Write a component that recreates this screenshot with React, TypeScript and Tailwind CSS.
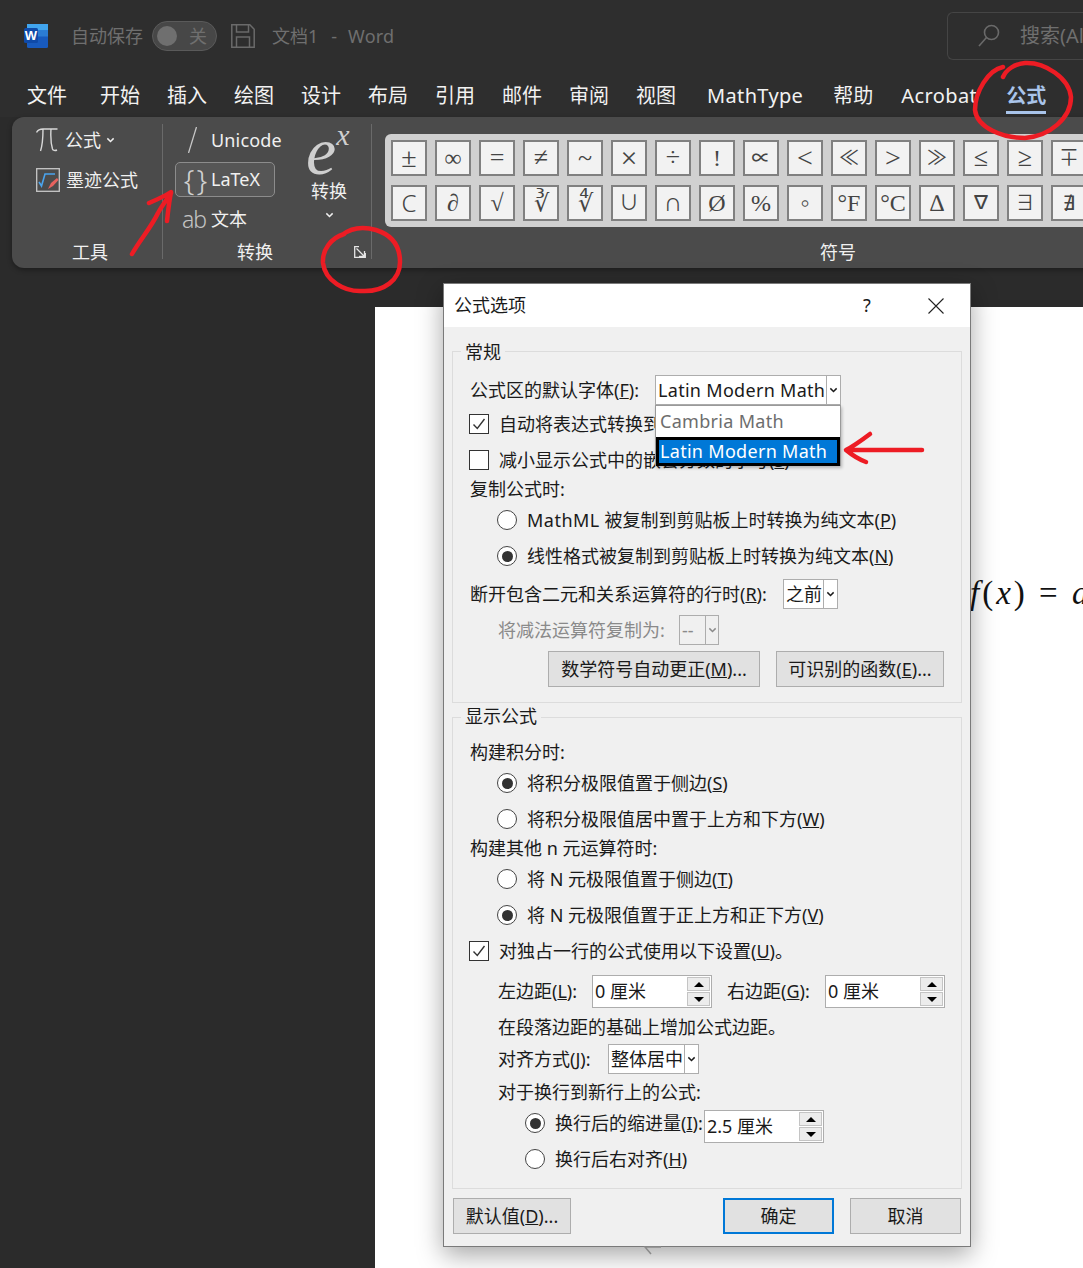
import React from 'react';

const TABS = [
  { label: '文件', gap: 'mr-[33px]' },
  { label: '开始', gap: 'mr-[27px]' },
  { label: '插入', gap: 'mr-[27px]' },
  { label: '绘图', gap: 'mr-[27px]' },
  { label: '设计', gap: 'mr-[27px]' },
  { label: '布局', gap: 'mr-[27px]' },
  { label: '引用', gap: 'mr-[27px]' },
  { label: '邮件', gap: 'mr-[27px]' },
  { label: '审阅', gap: 'mr-[27px]' },
  { label: '视图', gap: 'mr-[31px]' },
  { label: 'MathType', gap: 'mr-[30px] tracking-[0.35px]' },
  { label: '帮助', gap: 'mr-[28px]' },
  { label: 'Acrobat', gap: 'mr-[29px] tracking-[0.4px]' },
];

// glyph plus the size that brings it near the gallery's look; the fallback fonts differ a lot
const SYMBOLS = [
  { s: '±', c: 'text-[28px]' },
  { s: '∞', c: 'text-[24px]' },
  { s: '=', c: 'text-[26px]' },
  { s: '≠', c: 'text-[26px]' },
  { s: '~', c: 'text-[26px]' },
  { s: '×', c: 'text-[30px]' },
  { s: '÷', c: 'text-[26px]' },
  { s: '!', c: 'text-[24px]' },
  { s: '∝', c: 'text-[19px] !font-medium' },
  { s: '<', c: 'text-[28px]' },
  { s: '≪', c: 'text-[20px] !font-normal' },
  { s: '>', c: 'text-[28px]' },
  { s: '≫', c: 'text-[20px] !font-normal' },
  { s: '≤', c: 'text-[26px]' },
  { s: '≥', c: 'text-[26px]' },
  { s: '∓', c: 'text-[20px] !font-normal' },
  { s: 'C', c: "font-['Noto_Sans',sans-serif] text-[24px]" },
  { s: '∂', c: 'text-[24px]' },
  { s: '√', c: 'text-[24px]' },
  { s: '∛', c: 'text-[24px]' },
  { s: '∜', c: 'text-[24px]' },
  { s: '∪', c: 'text-[20px] !font-normal' },
  { s: '∩', c: 'text-[26px]' },
  { s: 'Ø', c: 'text-[24px]' },
  { s: '%', c: 'text-[24px]' },
  { s: '∘', c: 'text-[24px]' },
  { s: '°F', c: 'text-[24px]' },
  { s: '°C', c: 'text-[24px]' },
  { s: '∆', c: 'text-[24px]' },
  { s: '∇', c: 'text-[19px] !font-medium' },
  { s: '∃', c: 'text-[20px] !font-normal' },
  { s: '∄', c: 'text-[20px] !font-normal' },
];

const Chevron = ({ className = '' }: { className?: string }) => (
  <svg viewBox="0 0 10 6" className={className} fill="none" stroke="currentColor" strokeWidth="1.6">
    <path d="M1.5 1.2 5 4.6l3.5-3.4" />
  </svg>
);

const Radio = ({ on = false }: { on?: boolean }) => (
  <span className="flex h-5 w-5 shrink-0 items-center justify-center rounded-full border-[1.5px] border-[#444] bg-white">
    {on && <span className="h-[11px] w-[11px] rounded-full bg-[#333]" />}
  </span>
);

const Check = ({ on = false }: { on?: boolean }) => (
  <span className="-ml-px flex h-5 w-5 shrink-0 items-center justify-center border border-[#333] bg-white">
    {on && (
      <svg viewBox="0 0 16 16" className="h-4 w-4" fill="none" stroke="#333" strokeWidth="1.4">
        <path d="M2.5 8.5 6.3 12.5 13.5 3" />
      </svg>
    )}
  </span>
);

const Select = ({ text, className = '', disabled = false }: { text: string; className?: string; disabled?: boolean }) => (
  <div className={`flex h-[30px] items-stretch border border-[#adadad] ${disabled ? 'bg-[#f0f0f0] text-[#8a8a8a]' : 'bg-white'} ${className}`}>
    <span className="flex-1 overflow-hidden whitespace-nowrap pl-[2px] leading-[28px]">{text}</span>
    <span className="flex w-[14px] shrink-0 items-center justify-center border-l border-[#adadad]">
      <Chevron className="h-[6px] w-[9px]" />
    </span>
  </div>
);

const Spinner = ({ text, className = '' }: { text: string; className?: string }) => (
  <div className={`flex h-[33px] w-[120px] shrink-0 items-stretch border border-[#adadad] bg-white ${className}`}>
    <span className="flex-1 whitespace-pre pl-[2px] leading-[31px]">{text}</span>
    <span className="flex w-[25px] shrink-0 flex-col gap-px p-px">
      <span className="flex flex-1 items-center justify-center border border-[#c4c4c4] bg-[#ececec]">
        <span className="h-0 w-0 border-x-[5px] border-b-[5px] border-x-transparent border-b-black" />
      </span>
      <span className="flex flex-1 items-center justify-center border border-[#c4c4c4] bg-[#ececec]">
        <span className="h-0 w-0 border-x-[5px] border-t-[5px] border-x-transparent border-t-black" />
      </span>
    </span>
  </div>
);

const DlgButton = ({ children, className = '' }: { children: React.ReactNode; className?: string }) => (
  <div className={`flex h-[36px] items-center justify-center border border-[#adadad] bg-[#e1e1e1] ${className}`}>{children}</div>
);

const RadioRow = ({ on, children, className = '' }: { on?: boolean; children: React.ReactNode; className?: string }) => (
  <div className={`flex h-9 items-center pl-[27px] ${className}`}>
    <Radio on={on} />
    <span className="ml-[10px] whitespace-nowrap">{children}</span>
  </div>
);

const App = () => {
  return (
    <div className="relative flex h-[1268px] w-[1083px] flex-col overflow-hidden bg-[#2b2b2b] font-['Noto_Sans','Noto_Sans_CJK_SC',sans-serif] text-[18px] text-[#1a1a1a]">
      <div className="bg-[#2e2e2e]">
        {/* title bar */}
        <div className="flex h-[70px] items-center justify-between pl-6 pt-[2px] text-[#6f6f6f]">
          <div className="flex items-center">
            <svg viewBox="0 0 24 24" className="h-6 w-6 shrink-0">
              <rect x="3" y="0" width="21" height="24" rx="1.5" fill="#185abd" />
              <rect x="3" y="0" width="21" height="6.5" fill="#41a5ee" />
              <rect x="3" y="6.5" width="21" height="6" fill="#2b7cd3" />
              <rect x="0" y="4" width="14" height="15" rx="1.5" fill="#0f4aa8" />
              <text x="7" y="16" textAnchor="middle" fontSize="13" fontWeight="700" fill="#fff" fontFamily="Liberation Sans">W</text>
            </svg>
            <span className="ml-[23px] whitespace-nowrap">自动保存</span>
            <div className="ml-[9px] flex h-[30px] w-[65px] items-center rounded-full border border-[#5a5a5a] bg-[#474747] pl-[4px]">
              <span className="h-[20px] w-[20px] rounded-full bg-[#6f6f6f]" />
              <span className="ml-[12px]">关</span>
            </div>
            <svg viewBox="0 0 24 24" className="ml-[14px] h-6 w-6" fill="none" stroke="#6a6a6a" strokeWidth="1.5">
              <path d="M.8.8h18l4.4 4.4v18H.8z" />
              <path d="M5.500 1v7h12V1M5.500 23v-10h13v10" />
            </svg>
            <span className="ml-[17px]">文档1</span>
            <span className="ml-[13px]">-</span>
            <span className="ml-[11px] tracking-[0.2px]">Word</span>
          </div>
          <div className="flex h-12 w-[136px] shrink-0 items-center rounded-l-md border border-r-0 border-[#454545] pl-[30px]">
            <svg viewBox="0 0 22 24" className="h-6 w-[22px] shrink-0" fill="none" stroke="#6a6a6a" strokeWidth="1.6">
              <circle cx="13.500" cy="8.500" r="7" />
              <path d="M8.500 13.500 1 22" />
            </svg>
            <span className="ml-[20px] whitespace-nowrap text-[20px]">搜索(Alt+Q)</span>
          </div>
        </div>

        {/* tabs */}
        <div className="flex h-[47px] items-center whitespace-nowrap pl-[27px] pt-1 text-[20px] text-[#f2f2f2]">
          {TABS.map((t) => (
            <span key={t.label} className={t.gap}>{t.label}</span>
          ))}
          <span className="relative font-bold text-[#a9c4ea]">
            公式
            <span className="absolute left-0 right-0 top-[30px] h-[3px] bg-[#a9c4ea]" />
          </span>
        </div>
      </div>

      {/* ribbon */}
      <div className="ml-3 flex h-[151px] w-[1300px] shrink-0 rounded-l-xl bg-[#4b4b4b] text-[#f0f0f0] shadow-[0_2px_5px_rgba(0,0,0,0.35)]">
        <div className="flex w-[150px] shrink-0 flex-col pl-[24px] pt-[6px]">
          <div className="flex h-[34px] items-center">
            <svg viewBox="0 0 22 24" className="h-6 w-[22px] shrink-0" fill="none" stroke="#d8d8d8" strokeWidth="1.4">
              <path d="M.5 4.500C2 1.500 4 1 7 1h14.500M7 1c0 9-.5 16-2.500 22M15 1c-.5 8 0 15 1.500 20 .5 1.500 2.500 2 4.500 1" />
            </svg>
            <span className="ml-[7px]">公式</span>
            <Chevron className="ml-[5px] h-[6px] w-[9px]" />
          </div>
          <div className="mt-[6px] flex h-[34px] items-center">
            <svg viewBox="0 0 24 24" className="h-6 w-6 shrink-0" fill="none">
              <rect x=".7" y=".7" width="22.600" height="22.600" stroke="#c8c8c8" strokeWidth="1.300" />
              <path d="M3 14l2.500 4L9 6h10" stroke="#4aa4ee" strokeWidth="1.600" />
              <path d="M12 21l3-6 6-5 1.500 2-5.500 6z" fill="#e6625e" />
            </svg>
            <span className="ml-[6px] whitespace-nowrap">墨迹公式</span>
          </div>
          <div className="mt-auto h-[32px] pr-[18px] text-center leading-[32px]">工具</div>
        </div>
        <div className="mt-[7px] h-[135px] w-px shrink-0 bg-[#6a6a6a]" />

        <div className="flex w-[208px] shrink-0 flex-col pt-[6px]">
          <div className="flex">
            <div className="flex w-[124px] shrink-0 flex-col pl-3">
              <div className="flex h-[34px] items-center pl-[13px]">
                <svg viewBox="0 0 9 26" className="h-[26px] w-[9px] shrink-0" stroke="#c8c8c8" strokeWidth="1.300">
                  <path d="M8.500 0 .5 26" />
                </svg>
                <span className="ml-[14px] tracking-[0.15px]">Unicode</span>
              </div>
              <div className="mt-[5px] flex h-[35px] w-[100px] items-center rounded-[5px] border border-[#8c8c8c] bg-[#565656] pl-[6px]">
                <span className="w-[24px] shrink-0 whitespace-pre text-center text-[30px] font-light leading-none tracking-[-3px] text-[#d0d0d0]">{'{ }'}</span>
                <span className="ml-[5px]">LaTeX</span>
              </div>
              <div className="mt-[5px] flex h-[34px] items-center pl-[7px]">
                <span className="w-[29px] shrink-0 text-[23px] font-light tracking-[-1px] text-[#c4c4c4]">ab</span>
                <span className="whitespace-nowrap">文本</span>
              </div>
            </div>
            <div className="flex w-[84px] shrink-0 flex-col items-center">
              <div className="flex h-[50px] w-[46px] items-start font-['Liberation_Serif',serif] italic text-[#cfcfcf]">
                <span className="text-[68px] leading-[56px]">e</span>
                <span className="text-[30px] leading-[24px]">x</span>
              </div>
              <span className="mt-[5px] leading-[27px]">转换</span>
              <Chevron className="mt-[7px] h-[6px] w-[9px]" />
            </div>
          </div>
          <div className="mt-auto flex h-[32px] items-center">
            <span className="flex-1 text-center">转换</span>
            <span className="flex w-[24px] shrink-0 pl-[7px]">
              <svg viewBox="0 0 12 12" className="h-3 w-3" fill="none" stroke="#e6e6e6" strokeWidth="1.300">
                <path d="M5 .7H.7V11.300H11.300V7" />
                <path d="M2.500 2.500 10.500 10.500M10.500 5V10.500H5" />
              </svg>
            </span>
          </div>
        </div>
        <div className="mt-[7px] h-[135px] w-px shrink-0 bg-[#6a6a6a]" />

        <div className="flex w-[919px] shrink-0 flex-col pl-[13px] pt-[17px]">
          <div className="grid h-[93px] w-[716px] grid-cols-[repeat(16,36px)] gap-x-2 gap-y-2 rounded-l-md bg-[#d0d0d0] py-[6px] pl-[6px]">
            {SYMBOLS.map((g, i) => (
              <div
                key={i}
                className={`flex h-9 w-9 items-center justify-center border-2 border-[#808080] bg-[#f2f2f2] font-['Liberation_Serif','Noto_Sans_CJK_SC','DejaVu_Sans',serif] font-light leading-none text-[#444] ${g.c}`}
              >
                {g.s}
              </div>
            ))}
          </div>
          <div className="mt-auto h-[32px] text-center leading-[32px]">符号</div>
        </div>
      </div>

      {/* document page */}
      <div className="ml-[375px] mt-[39px] flex flex-1 overflow-hidden bg-white pl-[595px] pt-[263px]">
        <span className="whitespace-pre font-['Liberation_Serif',serif] text-[33px] leading-[46px] tracking-[3px] text-[#111]">
          <i>f</i>(<i>x</i>) = <i>a</i>
        </span>
      </div>

      {/* dialog */}
      <div className="absolute left-[443px] top-[283px] h-[964px] w-[528px] border border-[#7a7a7a] bg-[#f0f0f0] shadow-[0_8px_24px_rgba(0,0,0,0.35)]">
        <div className="flex h-[43px] items-center bg-white pl-[10px]">
          <span>公式选项</span>
          <span className="ml-[337px]">?</span>
          <svg viewBox="0 0 16 16" className="ml-[57px] h-4 w-4" fill="none" stroke="#222" strokeWidth="1.100">
            <path d="M.5.5l15 15M15.500.5l-15 15" />
          </svg>
        </div>

        <div className="relative ml-2 mt-6 h-[352px] w-[510px] border border-[#dcdcdc] pl-[17px]">
          <span className="absolute left-[8px] top-[-13px] bg-[#f0f0f0] px-1 leading-[26px]">常规</span>
          <div className="mt-[23px] flex h-[30px] items-center">
            <span className="w-[185px] shrink-0 whitespace-nowrap">公式区的默认字体(<u>F</u>):</span>
            <Select text="Latin Modern Math" className="w-[186px] tracking-[0.3px]" />
          </div>
          <div className="mt-px flex h-9 items-center">
            <Check on />
            <span className="ml-[10px] whitespace-nowrap">自动将表达式转换到专业格式</span>
          </div>
          <div className="flex h-9 items-center">
            <Check />
            <span className="ml-[10px] whitespace-nowrap">减小显示公式中的嵌套分数的字号(<u>S</u>)</span>
          </div>
          <div className="h-[22px] leading-[22px]">复制公式时:</div>
          <RadioRow className="mt-[2px]"><span className="tracking-[0.5px]">MathML</span> 被复制到剪贴板上时转换为纯文本(<u>P</u>)</RadioRow>
          <RadioRow on>线性格式被复制到剪贴板上时转换为纯文本(<u>N</u>)</RadioRow>
          <div className="mt-[5px] flex h-[30px] items-center">
            <span className="w-[313px] shrink-0 whitespace-nowrap">断开包含二元和关系运算符的行时(<u>R</u>):</span>
            <Select text="之前" className="w-[55px]" />
          </div>
          <div className="mt-[6px] flex h-[30px] items-center pl-[28px]">
            <span className="w-[181px] shrink-0 whitespace-nowrap text-[#8a8a8a]">将减法运算符复制为:</span>
            <Select text="--" disabled className="w-[40px] [&>span:last-child]:w-[13px]" />
          </div>
          <div className="mt-[6px] flex pl-[78px]">
            <DlgButton className="w-[212px]">数学符号自动更正(<u>M</u>)...</DlgButton>
            <DlgButton className="ml-4 w-[168px]">可识别的函数(<u>E</u>)...</DlgButton>
          </div>
        </div>

        <div className="relative ml-2 mt-[14px] h-[472px] w-[510px] border border-[#dcdcdc] pl-[17px]">
          <span className="absolute left-[8px] top-[-15px] bg-[#f0f0f0] px-1 leading-[26px]">显示公式</span>
          <div className="mt-[23px] h-[22px] leading-[22px]">构建积分时:</div>
          <RadioRow on className="mt-[2px]">将积分极限值置于侧边(<u>S</u>)</RadioRow>
          <RadioRow>将积分极限值居中置于上方和下方(<u>W</u>)</RadioRow>
          <div className="h-[22px] leading-[22px]">构建其他 n 元运算符时:</div>
          <RadioRow className="mt-[2px]">将 N 元极限值置于侧边(<u>T</u>)</RadioRow>
          <RadioRow on>将 N 元极限值置于正上方和正下方(<u>V</u>)</RadioRow>
          <div className="flex h-9 items-center">
            <Check on />
            <span className="ml-[10px] whitespace-nowrap">对独占一行的公式使用以下设置(<u>U</u>)。</span>
          </div>
          <div className="mt-[6px] flex h-[33px] items-center pl-[28px]">
            <span className="w-[94px] shrink-0 whitespace-nowrap">左边距(<u>L</u>):</span>
            <Spinner text="0 厘米" />
            <span className="ml-[15px] w-[98px] shrink-0 whitespace-nowrap">右边距(<u>G</u>):</span>
            <Spinner text="0 厘米" />
          </div>
          <div className="mt-2 h-[22px] whitespace-nowrap pl-[28px] leading-[22px]">在段落边距的基础上增加公式边距。</div>
          <div className="mt-[6px] flex h-[30px] items-center pl-[28px]">
            <span className="w-[110px] shrink-0 whitespace-nowrap">对齐方式(<u>J</u>):</span>
            <Select text="整体居中" className="w-[91px]" />
          </div>
          <div className="mt-[7px] h-[22px] pl-[28px] leading-[22px]">对于换行到新行上的公式:</div>
          <div className="mt-[7px] flex h-[33px] items-start pl-[55px]">
            <div className="flex h-[26px] w-[179px] shrink-0 items-center">
              <Radio on />
              <span className="ml-[10px] whitespace-nowrap">换行后的缩进量(<u>I</u>):</span>
            </div>
            <Spinner text="2.5 厘米" />
          </div>
          <div className="flex h-8 items-center pl-[55px]">
            <Radio />
            <span className="ml-[10px] whitespace-nowrap">换行后右对齐(<u>H</u>)</span>
          </div>
        </div>

        <div className="ml-[9px] mt-[9px] flex">
          <DlgButton className="w-[118px]">默认值(<u>D</u>)...</DlgButton>
          <DlgButton className="ml-[152px] w-[111px] !border-2 !border-[#0078d7]">确定</DlgButton>
          <DlgButton className="ml-4 w-[111px]">取消</DlgButton>
        </div>

        {/* open dropdown list */}
        <div className="absolute left-[211px] top-[121px] h-[61px] w-[186px] border border-[#9a9a9a] bg-white shadow-[1px_2px_3px_rgba(0,0,0,0.25)]">
          <div className="h-[31px] pl-1 leading-[31px] tracking-[0.3px] text-[#6d6d6d]">Cambria Math</div>
          <div className="h-[29px] border-[3px] border-black bg-[#0078d7] pl-px leading-[22px] tracking-[0.3px] text-white">Latin Modern Math</div>
        </div>
      </div>

      {/* bit of the page poking out below the dialog */}
      <svg viewBox="0 0 20 10" className="absolute left-[643px] top-[1246px] h-[10px] w-5" fill="none" stroke="#8a8a8a" strokeWidth="1.500">
        <path d="M18 1H2l6 7" />
      </svg>

      {/* red pen annotations */}
      <svg viewBox="0 0 1083 1268" className="absolute left-0 top-0 h-[1268px] w-[1083px]" fill="none" stroke="#ed1c24" strokeWidth="4.500" strokeLinecap="round" strokeLinejoin="round">
        <path d="M132 254C140 240 152 226 158 213 163 204 168 198 171 193M149 203C156 200 165 196 171 192 169 202 168 212 167 221" />
        <path d="M344 234C331 238 322 250 323 263 325 281 345 292 362 291 384 292 400 280 400 262 400 246 392 235 376 230 362 226 351 228 342 235" />
        <path d="M1003 67C988 70 975 92 975 110 977 128 1003 138 1025 138 1050 136 1071 118 1071 97 1069 78 1045 62 1025 63 1014 64 1006 70 1003 77" />
        <path d="M922 450H847M870 434C862 440 854 446 846 450 852 455 858 459 866 462" />
      </svg>
    </div>
  );
};

export default App;
